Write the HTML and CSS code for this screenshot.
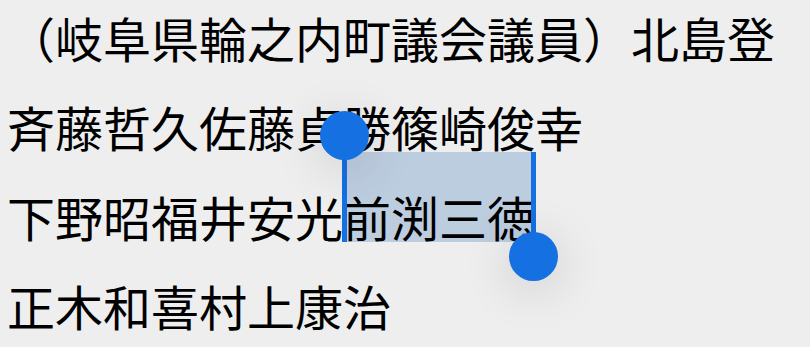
FILE: index.html
```html
<!DOCTYPE html>
<html lang="ja">
<head>
<meta charset="utf-8">
<link rel="stylesheet" href="styles.css">
</head>
<body>
<div class="text">
  <p class="line">（岐阜県輪之内町議会議員）北島登</p>
  <p class="line">斉藤哲久佐藤貞勝篠崎俊幸</p>
  <p class="line">下野昭福井安光<span class="sel">前渕三徳<span class="handle start"><span class="knob"></span></span><span class="handle end"><span class="knob"></span></span></span></p>
  <p class="line">正木和喜村上康治</p>
</div>
</body>
</html>
```

FILE: styles.css
```css
html, body {
  margin: 0;
  padding: 0;
  background: #eeeeee;
  overflow: hidden;
}
.text {
  margin-top: -7px;
  padding-left: 7px;
  font-family: "Noto Sans CJK JP", "Noto Sans", sans-serif;
  font-size: 48px;
  color: #000;
}
.line {
  margin: 0;
  height: 89.3px;
  line-height: 89.3px;
  white-space: nowrap;
}
.sel {
  position: relative;
  z-index: 0;
}
.sel::before {
  content: "";
  position: absolute;
  left: 0;
  right: 0;
  top: -29px;
  bottom: 9px;
  background: #bdcde0;
  z-index: -1;
}
.handle {
  position: absolute;
  width: 5px;
  background: #1570e2;
}
.handle.start {
  left: -1px;
  top: -46px;
  bottom: 9px;
}
.handle.end {
  right: -1px;
  top: -29px;
  bottom: -6px;
}
.knob {
  position: absolute;
  width: 49px;
  height: 49px;
  border-radius: 50%;
  background: #1570e2;
  box-shadow: 0 8px 50px rgba(0, 0, 0, 0.16);
}
.start .knob {
  left: -22px;
  top: -24px;
}
.end .knob {
  right: -22px;
  bottom: -24px;
}
```
